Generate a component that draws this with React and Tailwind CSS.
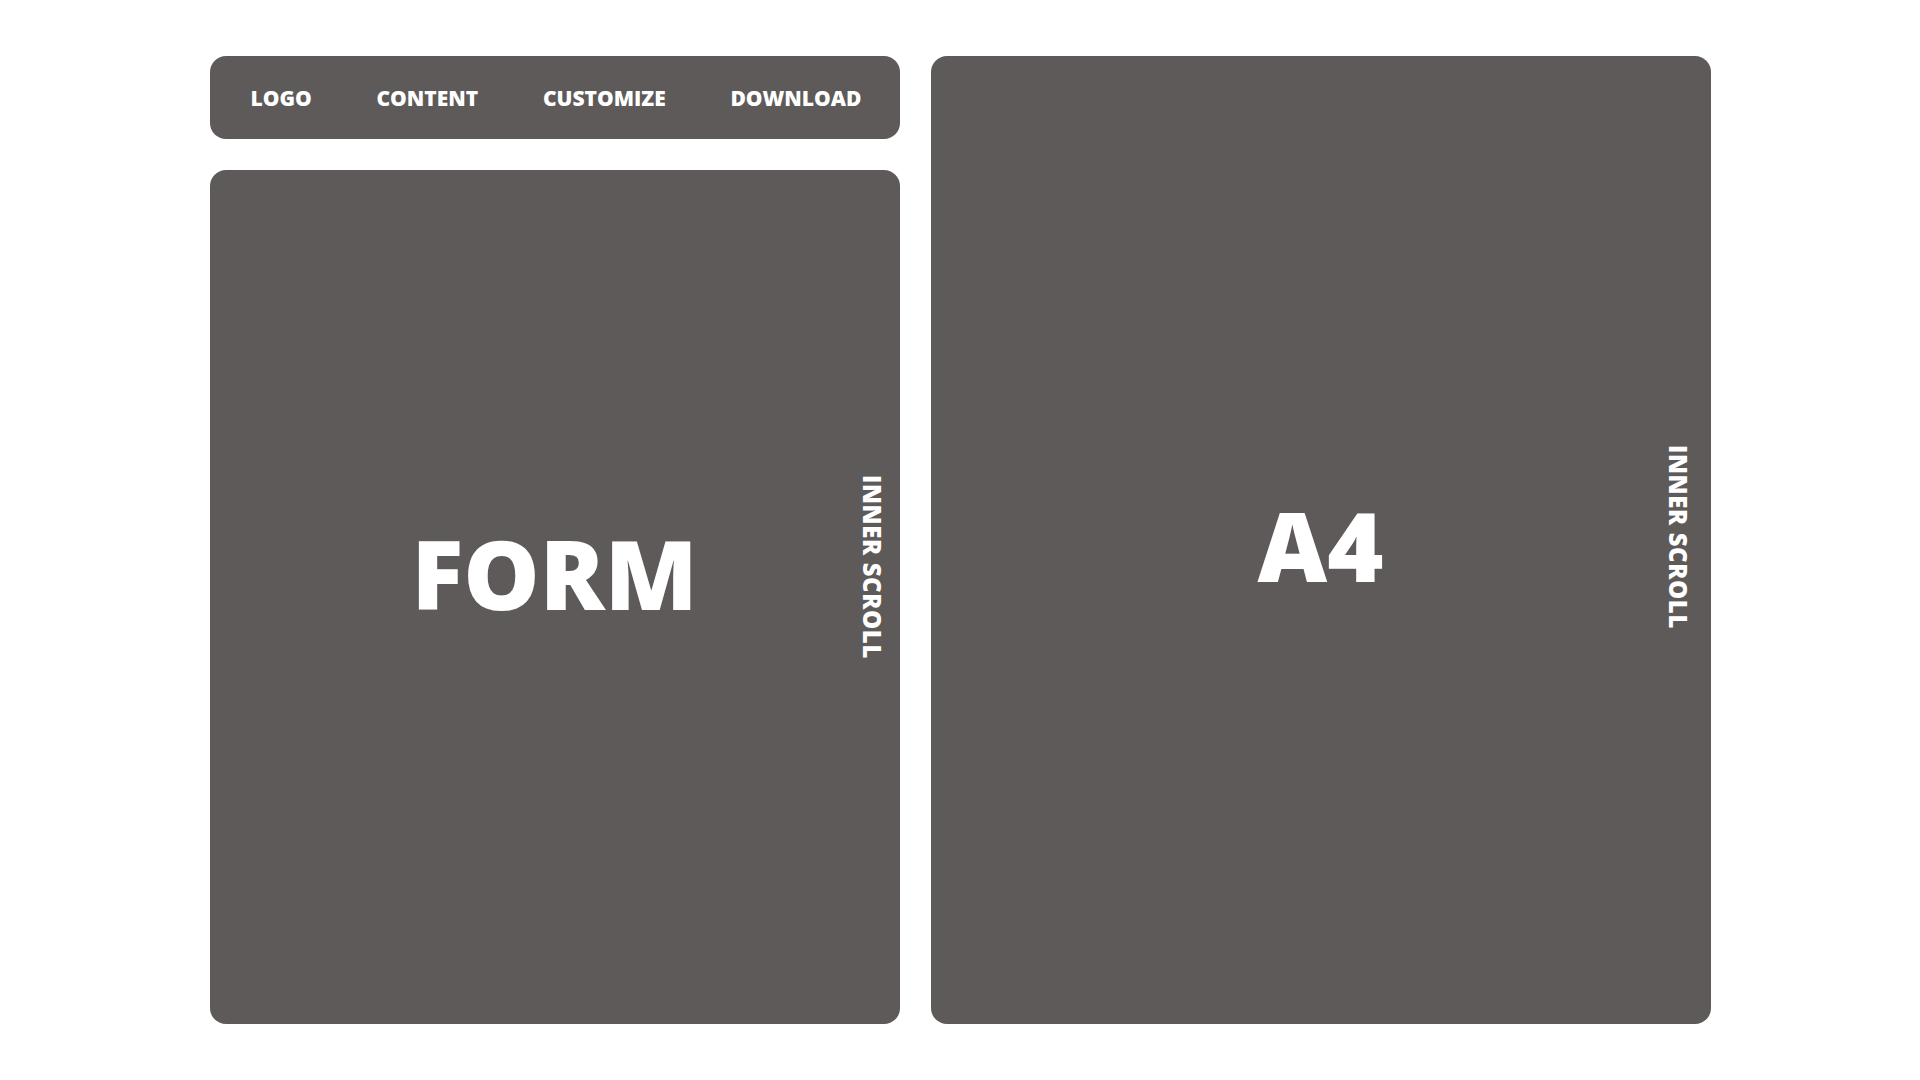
export default function App() {
  const navItems = ['LOGO', 'CONTENT', 'CUSTOMIZE', 'DOWNLOAD'];
  const font = { fontFamily: '"Open Sans", "DejaVu Sans", sans-serif' };

  return (
    <div className="w-full h-[1080px] bg-white" style={font}>
      <div className="mx-auto w-[1501px] pt-[56px] flex gap-[31px]">
        {/* Left column: nav + form */}
        <div className="w-[690px] flex flex-col gap-[31px]">
          <nav className="h-[83px] rounded-2xl bg-[#5e5a59] pl-[41px] pr-[38px] pt-[3px] flex items-center justify-between">
            {navItems.map(item => (
              <span key={item} className="text-white text-[21px] font-extrabold">
                {item}
              </span>
            ))}
          </nav>

          <section className="h-[854px] rounded-2xl bg-[#5e5a59] flex items-center pr-[16px]">
            <div className="flex-1 flex justify-center pl-[40px] mb-[48px]">
              <span className="text-white text-[96px] font-extrabold leading-none">FORM</span>
            </div>
            <span
              className="text-white text-[24px] font-extrabold leading-none tracking-[0.6px] mb-[60px]"
              style={{ writingMode: 'vertical-rl' }}
            >
              INNER SCROLL
            </span>
          </section>
        </div>

        {/* Right column: A4 preview */}
        <section className="w-[780px] h-[968px] rounded-2xl bg-[#5e5a59] flex items-center pr-[21px]">
          <div className="flex-1 flex justify-center pl-[45px] mt-[10px]">
            <span className="text-white text-[96px] font-extrabold leading-none">A4</span>
          </div>
          <span
            className="text-white text-[24px] font-extrabold leading-none tracking-[0.6px] mb-[6px]"
            style={{ writingMode: 'vertical-rl' }}
          >
            INNER SCROLL
          </span>
        </section>
      </div>
    </div>
  );
}
